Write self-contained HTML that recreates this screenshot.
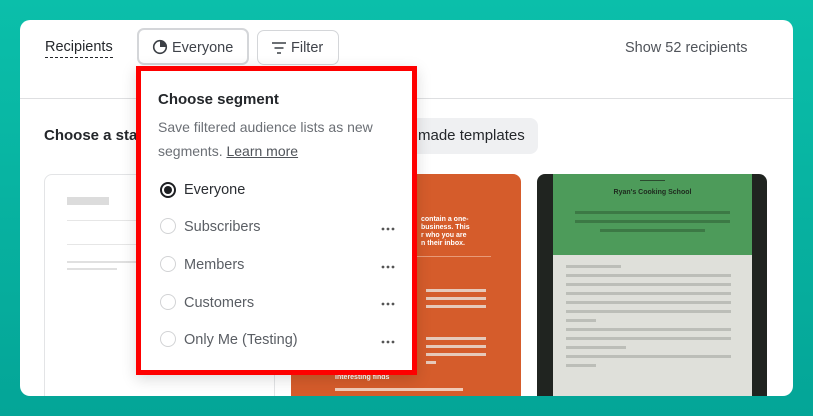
<!DOCTYPE html>
<html><head><meta charset="utf-8"><style>
*{box-sizing:border-box;margin:0;padding:0}
body{width:813px;height:416px;overflow:hidden;background:linear-gradient(180deg,#0bbfaa,#04a597);font-family:"Liberation Sans",sans-serif;position:relative}
.card{position:absolute;left:20px;top:20px;width:773px;height:376px;background:#fff;border-radius:10px;overflow:hidden}
.abs{position:absolute}
.t{color:#3f434a}
.ln{height:3px;background:#e9dcd4;opacity:.85;margin:5px 0}
.gl{height:3px;background:#7b7d78;opacity:.35;margin:6px 0}
.dots{position:absolute;left:240px}
</style></head><body>
<div class="card">
  <div class="abs t" style="left:25px;top:19px;font-size:14.5px;color:#24272b;border-bottom:1px dashed #24272b;padding-bottom:2px">Recipients</div>
  <div class="abs" style="left:117px;top:8px;width:112px;height:37px;border:2px solid #d4d6d9;border-radius:7px;"></div>
  <svg class="abs" style="left:132px;top:19px" width="16" height="16" viewBox="0 0 16 16"><circle cx="8" cy="8" r="6.3" fill="none" stroke="#3c4046" stroke-width="1.6"/><path d="M8 8V1.7A6.3 6.3 0 0 1 14.3 8Z" fill="#3c4046"/></svg>
  <div class="abs t" style="left:152px;top:20px;font-size:14.5px">Everyone</div>
  <div class="abs" style="left:237px;top:10px;width:82px;height:35px;border:1px solid #d4d6d9;border-radius:7px"></div>
  <svg class="abs" style="left:251px;top:21px" width="16" height="14" viewBox="0 0 16 14"><path d="M1 2h14M3.5 7h9M6 12h4" stroke="#3c4046" stroke-width="1.6"/></svg>
  <div class="abs t" style="left:271px;top:20px;font-size:14.5px">Filter</div>
  <div class="abs t" style="left:605px;top:20px;font-size:14.5px;color:#50545a">Show 52 recipients</div>
  <div class="abs" style="left:0;top:78px;width:773px;height:1px;background:#dedfe1"></div>
  <div class="abs" style="left:24px;top:107px;font-size:15px;font-weight:bold;color:#24272b">Choose a sta</div>
  <div class="abs" style="left:385px;top:98px;width:133px;height:36px;background:#eff0f2;border-radius:8px"></div>
  <div class="abs" style="left:398px;top:107px;font-size:15px;color:#24272b">made templates</div>
  <div class="abs" style="left:24px;top:154px;width:231px;height:260px;border:1px solid #e3e4e6;border-radius:8px">
    <div class="abs" style="left:22px;top:22px;width:42px;height:8px;background:#dcdcdc"></div>
    <div class="abs" style="left:22px;top:45px;width:200px;height:1px;background:#e6e6e6"></div>
    <div class="abs" style="left:22px;top:69px;width:200px;height:1px;background:#e6e6e6"></div>
    <div class="abs" style="left:22px;top:86px;width:200px;height:2px;background:#e0e0e0"></div>
    <div class="abs" style="left:22px;top:93px;width:50px;height:2px;background:#e0e0e0"></div>
  </div>
  <div class="abs" style="left:271px;top:154px;width:230px;height:260px;background:#d55c2b;border-radius:8px">
    <div class="abs" style="left:130px;top:42px;width:90px;font-size:7px;line-height:8px;color:#fff;font-weight:bold">contain a one-<br>business. This<br>r who you are<br>n their inbox.</div>
    <div class="abs" style="left:20px;top:82px;width:180px;height:1px;background:#e89a78"></div>
    <div class="abs" style="left:135px;top:110px;width:60px"><div class="ln"></div><div class="ln"></div><div class="ln"></div></div>
    <div class="abs" style="left:135px;top:158px;width:60px"><div class="ln"></div><div class="ln"></div><div class="ln"></div><div class="ln" style="width:10px"></div></div>
    <div class="abs" style="left:44px;top:200px;font-size:7px;color:#fff;font-weight:bold">Interesting finds</div>
    <div class="abs" style="left:44px;top:214px;width:128px;height:3px;background:#f0cbb8"></div>
  </div>
  <div class="abs" style="left:517px;top:154px;width:230px;height:260px;background:#202420;border-radius:8px;overflow:hidden">
    <div class="abs" style="left:16px;top:0;width:199px;height:81px;background:#4d9b5a">
      <div class="abs" style="left:87px;top:6px;width:25px;height:1px;background:#2a4a2e"></div>
      <div class="abs" style="left:0;top:15px;width:199px;text-align:center;font-size:7px;font-weight:bold;color:#1e2a1e">Ryan's Cooking School</div>
      <div class="abs" style="left:22px;top:31px;width:155px"><div class="gl" style="background:#1c3a20"></div><div class="gl" style="background:#1c3a20"></div><div class="gl" style="background:#1c3a20;margin-left:25px;width:105px"></div></div>
    </div>
    <div class="abs" style="left:16px;top:81px;width:199px;height:180px;background:#dfe0da">
      <div class="abs" style="left:13px;top:4px;width:165px"><div class="gl" style="width:55px"></div><div class="gl"></div><div class="gl"></div><div class="gl"></div><div class="gl"></div><div class="gl"></div><div class="gl" style="width:30px"></div><div class="gl"></div><div class="gl"></div><div class="gl" style="width:60px"></div><div class="gl"></div><div class="gl" style="width:30px"></div></div>
    </div>
  </div>
</div>
<div class="abs" style="left:136px;top:66px;width:281px;height:309px;background:#fff;border:5px solid #fe0000;box-shadow:0 4px 14px rgba(0,0,0,.15)">
  <div class="abs" style="left:17px;top:20px;font-size:15px;font-weight:bold;color:#24272b">Choose segment</div>
  <div class="abs" style="left:17px;top:44px;width:250px;font-size:14px;line-height:24px;color:#6b6f75">Save filtered audience lists as new segments. <span style="text-decoration:underline;color:#50545a">Learn more</span></div>
  <div class="abs" style="left:19px;top:111px;width:16px;height:16px;border:2px solid #1d1f22;border-radius:50%"><div style="margin:2px;width:8px;height:8px;border-radius:50%;background:#1d1f22"></div></div>
  <div class="abs" style="left:43px;top:111px;font-size:14.5px;color:#2b2e33">Everyone</div>
  <div class="abs" style="left:19px;top:147px;width:16px;height:16px;border:1.5px solid #d2d3d5;border-radius:50%"></div>
  <div class="abs" style="left:43px;top:148px;font-size:14.5px;color:#5a5e64">Subscribers</div>
  <svg class="dots" style="top:156px" width="14" height="4"><circle cx="2" cy="2" r="1.4" fill="#555"/><circle cx="7" cy="2" r="1.4" fill="#555"/><circle cx="12" cy="2" r="1.4" fill="#555"/></svg>
  <div class="abs" style="left:19px;top:185px;width:16px;height:16px;border:1.5px solid #d2d3d5;border-radius:50%"></div>
  <div class="abs" style="left:43px;top:186px;font-size:14.5px;color:#5a5e64">Members</div>
  <svg class="dots" style="top:194px" width="14" height="4"><circle cx="2" cy="2" r="1.4" fill="#555"/><circle cx="7" cy="2" r="1.4" fill="#555"/><circle cx="12" cy="2" r="1.4" fill="#555"/></svg>
  <div class="abs" style="left:19px;top:223px;width:16px;height:16px;border:1.5px solid #d2d3d5;border-radius:50%"></div>
  <div class="abs" style="left:43px;top:224px;font-size:14.5px;color:#5a5e64">Customers</div>
  <svg class="dots" style="top:231px" width="14" height="4"><circle cx="2" cy="2" r="1.4" fill="#555"/><circle cx="7" cy="2" r="1.4" fill="#555"/><circle cx="12" cy="2" r="1.4" fill="#555"/></svg>
  <div class="abs" style="left:19px;top:260px;width:16px;height:16px;border:1.5px solid #d2d3d5;border-radius:50%"></div>
  <div class="abs" style="left:43px;top:261px;font-size:14.5px;color:#5a5e64">Only Me (Testing)</div>
  <svg class="dots" style="top:269px" width="14" height="4"><circle cx="2" cy="2" r="1.4" fill="#555"/><circle cx="7" cy="2" r="1.4" fill="#555"/><circle cx="12" cy="2" r="1.4" fill="#555"/></svg>
</div>
</body></html>
